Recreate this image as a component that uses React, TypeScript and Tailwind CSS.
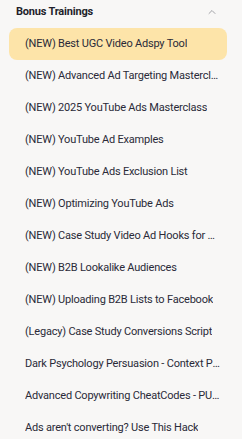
import { ChevronUp } from 'lucide-react'

const lessons = [
  '(NEW) Best UGC Video Adspy Tool',
  '(NEW) Advanced Ad Targeting Masterclass',
  '(NEW) 2025 YouTube Ads Masterclass',
  '(NEW) YouTube Ad Examples',
  '(NEW) YouTube Ads Exclusion List',
  '(NEW) Optimizing YouTube Ads',
  '(NEW) Case Study Video Ad Hooks for Mobile Apps',
  '(NEW) B2B Lookalike Audiences',
  '(NEW) Uploading B2B Lists to Facebook',
  '(Legacy) Case Study Conversions Script',
  'Dark Psychology Persuasion - Context Priming',
  'Advanced Copywriting CheatCodes - PUNCHY',
  "Ads aren't converting? Use This Hack",
]

export default function App() {
  return (
    <div className="w-[242px] h-[439px] overflow-hidden bg-[#f8f7f6] font-['Roboto',sans-serif]">
      {/* Section header */}
      <div className="flex items-center justify-between pl-4 pr-[24px] h-[24px]">
        <span className="text-[11px] tracking-[-0.2px] font-bold text-[#1f1f2b]">Bonus Trainings</span>
        <ChevronUp size={12} strokeWidth={2} className="text-[#a3a3a8]" />
      </div>

      {/* Lessons */}
      <div className="flex flex-col pl-[9px] pr-[15px] pt-[4px]">
        {lessons.map((title, i) => (
          <div
            key={i}
            className={`h-[32px] flex items-center rounded-lg pl-4 pr-[5px] ${i === 0 ? 'bg-[#fde4a9]' : ''}`}
          >
            <span className="truncate text-[11px] tracking-[-0.2px] text-[#2a2a38]">{title}</span>
          </div>
        ))}
      </div>
    </div>
  )
}
